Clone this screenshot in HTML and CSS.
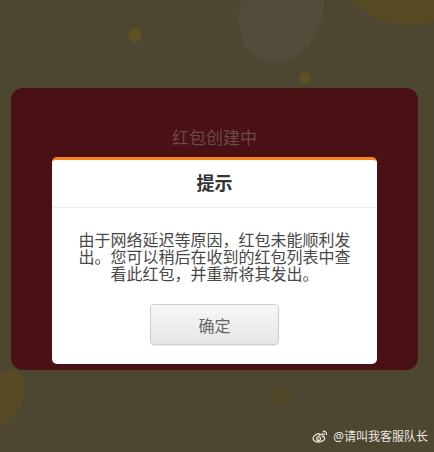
FILE: index.html
```html
<!DOCTYPE html>
<html lang="zh-CN">
<head>
    <meta charset="UTF-8">
    <meta name="viewport" content="width=device-width, initial-scale=1.0">
    <title>红包创建中</title>
    <link rel="stylesheet" href="styles.css">
</head>
<body>
    <div class="scene">
        <!-- background decorations -->
        <div class="deco deco-sun"></div>
        <div class="deco deco-glow"></div>
        <div class="deco deco-dot1"></div>
        <div class="deco deco-dot2"></div>
        <div class="deco deco-dot3"></div>
        <div class="deco deco-blob"></div>

        <div class="packet">
            <div class="packet-title">红包创建中</div>
            <div class="dialog">
                <div class="dialog-head">提示</div>
                <div class="dialog-body">
                    <p class="dialog-text">由于网络延迟等原因，红包未能顺利发出。您可以稍后在收到的红包列表中查看此红包，并重新将其发出。</p>
                    <button class="dialog-btn">确定</button>
                </div>
            </div>
        </div>

        <div class="watermark">
            <svg class="weibo" width="16" height="13" viewBox="0 0 16 13">
                <path d="M6.2 3.6C3.4 4.5 0.8 6.8 1.1 9c.3 2.2 3.6 3.4 6.8 2.9 3.3-.5 5.2-2.3 4.8-3.9-.2-1-1.3-1.4-1.9-1.5.5-1 .4-1.8-.3-2.1-.8-.3-2.1.1-3 .6.3-.9-.2-1.6-1.3-1.4z" fill="none" stroke="#e9e6e0" stroke-width="1.3"/>
                <circle cx="6.6" cy="8.6" r="2" fill="none" stroke="#e9e6e0" stroke-width="1.1"/>
                <circle cx="6.4" cy="8.8" r="0.7" fill="#e9e6e0"/>
                <path d="M11 1.2c2-.3 3.8 1.2 3.6 3.4" fill="none" stroke="#e9e6e0" stroke-width="1.1" stroke-linecap="round"/>
                <path d="M11.2 3c.9-.1 1.7.6 1.6 1.6" fill="none" stroke="#e9e6e0" stroke-width="1" stroke-linecap="round"/>
            </svg>
            <span>@请叫我客服队长</span>
        </div>
    </div>
</body>
</html>
```

FILE: styles.css
```css
body {
    margin: 0;
    background-color: #4d4630;
    font-family: "Noto Sans", "Noto Sans CJK SC", sans-serif;
}
.scene {
    position: relative;
    width: 434px;
    height: 452px;
    overflow: hidden;
    box-sizing: border-box;
    padding: 88px 16px 0 11px;
}
.deco {
    position: absolute;
    border-radius: 50%;
}
.deco-sun {
    left: 345px;
    top: -75px;
    width: 130px;
    height: 100px;
    background-color: #574922;
}
.deco-glow {
    left: 240px;
    top: -40px;
    width: 82px;
    height: 104px;
    background-color: #524d3a;
    transform: rotate(20deg);
}
.deco-dot1 {
    left: 128px;
    top: 28px;
    width: 14px;
    height: 14px;
    background-color: #5f5126;
}
.deco-dot2 {
    left: 299px;
    top: 72px;
    width: 12px;
    height: 12px;
    background-color: #5e4f26;
}
.deco-dot3 {
    left: 269px;
    top: 385px;
    width: 22px;
    height: 22px;
    background-color: #524629;
}
.deco-blob {
    left: -14px;
    top: 368px;
    width: 36px;
    height: 60px;
    background-color: #574a25;
    transform: rotate(25deg);
}
.packet {
    position: relative;
    width: 407px;
    box-sizing: border-box;
    padding: 38px 41px 6px;
    background-color: #4a1114;
    border-radius: 12px;
}
.packet-title {
    height: 24px;
    margin-bottom: 7px;
    font-size: 17px;
    line-height: 24px;
    text-align: center;
    color: #6b4a4d;
}
.dialog {
    background-color: #fff;
    border-top: 3px solid #f4841d;
    border-radius: 5px;
}
.dialog-head {
    height: 47px;
    line-height: 47px;
    font-size: 18px;
    font-weight: bold;
    text-align: center;
    color: #333;
    border-bottom: 1px solid #eeeeee;
}
.dialog-body {
    display: flex;
    flex-direction: column;
    align-items: center;
    padding: 24px 26px 19px;
}
.dialog-text {
    margin: 0 0 21px;
    font-size: 16px;
    line-height: 17px;
    text-align: center;
    color: #484848;
}
.dialog-btn {
    width: 129px;
    height: 41px;
    padding: 0;
    font-family: inherit;
    font-size: 16px;
    color: #666;
    background: linear-gradient(#f8f8f8, #e5e5e5);
    border: 1px solid #cdcdcd;
    border-radius: 4px;
    box-shadow: 0 1px 1px rgba(0,0,0,0.08);
}
.watermark {
    position: absolute;
    right: 6px;
    bottom: 7px;
    display: flex;
    align-items: center;
    gap: 5px;
    font-size: 12px;
    color: #ebe8e2;
}
```
